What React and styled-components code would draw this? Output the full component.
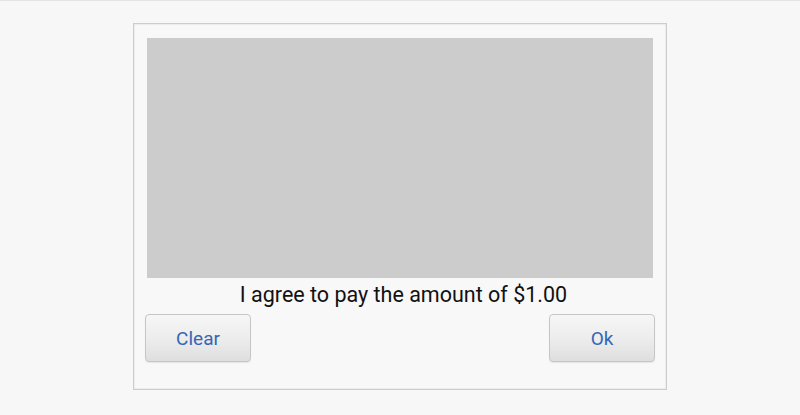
import React from "react"
import styled, { createGlobalStyle } from "styled-components"

const GlobalStyle = createGlobalStyle`
  html, body {
    margin: 0;
    padding: 0;
    background-color: #f7f7f7;
    font-family: Roboto, "Noto Sans", sans-serif;
  }
`

const Page = styled.div`
  height: 415px;
  border-top: 1px solid #e4e4e4;
  box-sizing: border-box;
  display: flex;
  justify-content: center;
  align-items: flex-start;
  padding-top: 22px;
`

const Panel = styled.div`
  width: 534px;
  height: 367px;
  box-sizing: border-box;
  border: 1px solid #cdcdcd;
  box-shadow: inset 0 0 0 1px #ececec;
  background-color: #f8f8f8;
  padding: 14px 11px 0;
  display: flex;
  flex-direction: column;
`

const SignaturePad = styled.div`
  height: 240px;
  margin: 0 2px;
  background-color: #cccccc;
`

const Agreement = styled.div`
  text-align: center;
  font-size: 21.5px;
  color: #111111;
  line-height: 24px;
  margin-top: 5px;
  padding-left: 7px;
`

const Actions = styled.div`
  display: flex;
  justify-content: space-between;
  margin-top: 7px;
`

const Button = styled.button`
  width: 106px;
  height: 48px;
  box-sizing: border-box;
  border: 1px solid #c6c6c6;
  border-radius: 4px;
  background: linear-gradient(#f6f6f6, #ececec 55%, #dedede);
  box-shadow: 0 1px 1px rgba(0, 0, 0, 0.08);
  font-family: Roboto, "Noto Sans", sans-serif;
  font-size: 19px;
  color: #3366b6;
  cursor: pointer;
  padding: 0;
`

const App = () => {
  return (
    <Page>
      <GlobalStyle />
      <Panel>
        <SignaturePad />
        <Agreement>I agree to pay the amount of $1.00</Agreement>
        <Actions>
          <Button>Clear</Button>
          <Button>Ok</Button>
        </Actions>
      </Panel>
    </Page>
  )
}

export default App
